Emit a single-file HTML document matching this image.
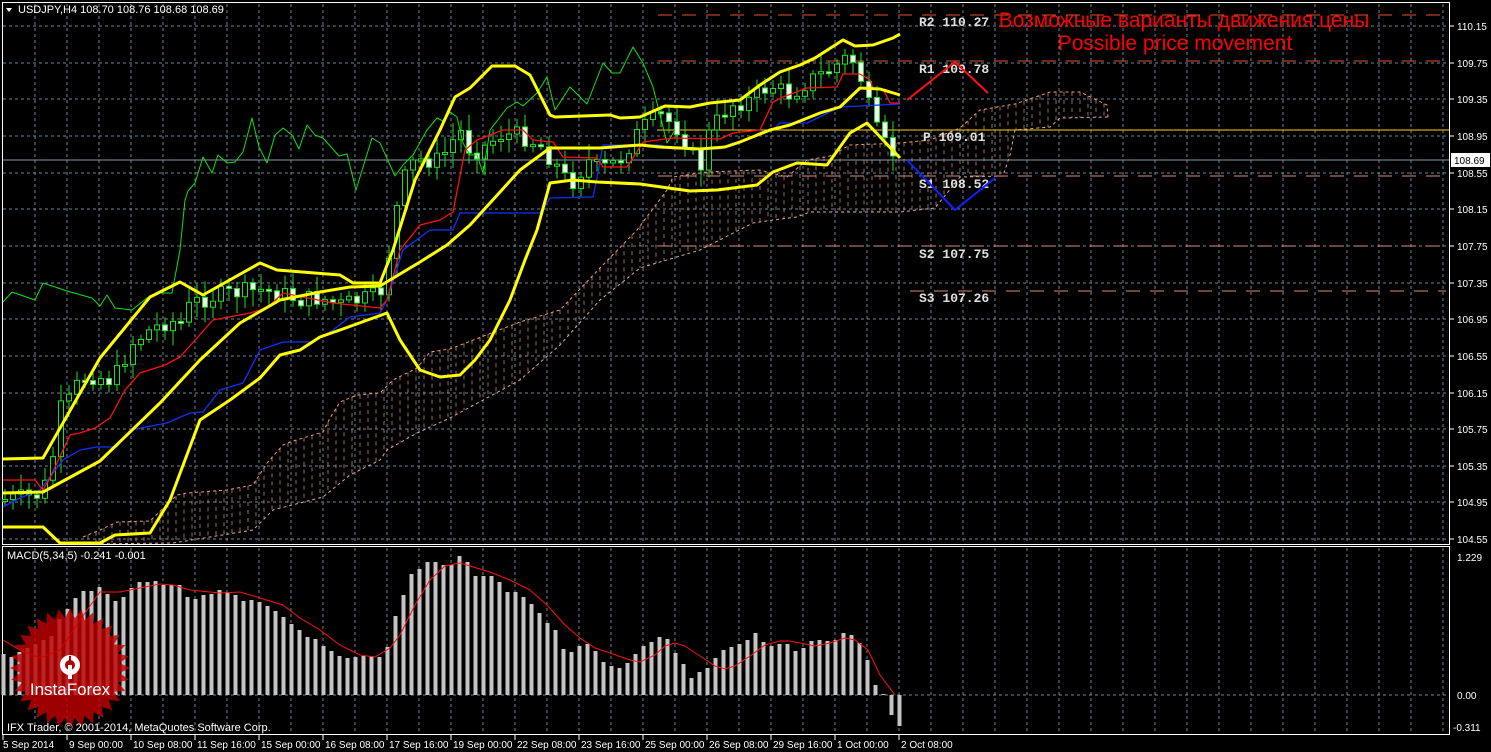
<!DOCTYPE html>
<html><head><meta charset="utf-8"><style>
html,body{margin:0;padding:0;background:#000;}
svg{display:block;font-family:"Liberation Sans",sans-serif;}
</style></head><body>
<svg id="s" width="1491" height="752" viewBox="0 0 1491 752" xmlns="http://www.w3.org/2000/svg">
<rect width="1491" height="752" fill="#000"/>
<g id="grid"></g>
<g id="cloud"></g>
<g id="lv"></g>
<g id="cand"></g>
<g id="lines"></g>
<g id="macd"></g>
<g id="logo" transform="translate(70,668)">
<polygon id="star" fill="#c00000" fill-opacity="0.82"/>
<g fill="#fff">
<circle cx="0" cy="-3" r="10"/>
</g>
<circle cx="0" cy="-3" r="5" fill="#b00000"/>
<rect x="-2" y="-3" width="4" height="14" fill="#fff"/>
<rect x="-1" y="-12" width="2" height="6" fill="#b00000"/>
<text x="0" y="27" fill="#fff" font-size="17" text-anchor="middle">InstaForex</text>
</g>
<g id="txt" font-size="11" fill="#fff">
<polygon points="6,8 12,8 9,12" fill="#fff"/>
<text x="18" y="13">USDJPY,H4  108.70 108.76 108.68 108.69</text>
<text x="7" y="559">MACD(5,34,5) -0.241 -0.001</text>
<text x="7" y="731">IFX Trader, © 2001-2014, MetaQuotes Software Corp.</text>
</g>
<g font-family="Liberation Mono,monospace" font-weight="bold" font-size="13" fill="#e0e0e0">
<text x="919" y="26">R2 110.27</text>
<text x="919" y="73">R1 109.78</text>
<text x="923" y="141">P 109.01</text>
<text x="919" y="188">S1 108.52</text>
<text x="919" y="258">S2 107.75</text>
<text x="919" y="302">S3 107.26</text>
</g>
<text x="1184" y="27" fill="#ff0000" font-size="21" text-anchor="middle">Возможные варианты движения цены</text>
<text x="1175" y="50" fill="#ff0000" font-size="21" text-anchor="middle">Possible price movement</text>
<polyline points="907,100 955,62 988,93" fill="none" stroke="#ff1010" stroke-width="2"/>
<polyline points="907,160 955,210 995,178" fill="none" stroke="#1020ff" stroke-width="2"/>
<g id="axis" font-size="10" fill="#fff"></g>
</svg>
<script>
var NS="http://www.w3.org/2000/svg";
function el(p,t,a,txt){var e=document.createElementNS(NS,t);for(var k in a)e.setAttribute(k,a[k]);if(txt!=null)e.textContent=txt;document.getElementById(p).appendChild(e);return e;}
var gc="#6f8096";
for(var x=35;x<=1443;x+=32){el("grid","line",{x1:x,y1:4,x2:x,y2:543,stroke:gc,"stroke-dasharray":"3,3"});el("grid","line",{x1:x,y1:548,x2:x,y2:733,stroke:gc,"stroke-dasharray":"3,3"});}
var prices=["110.15","109.75","109.35","108.95","108.55","108.15","107.75","107.35","106.95","106.55","106.15","105.75","105.35","104.95","104.55"];
for(var k=0;k<15;k++){var y=Math.round(26+36.65*k);el("grid","line",{x1:3,y1:y,x2:1449,y2:y,stroke:gc,"stroke-dasharray":"3,3"});el("axis","text",{x:1457,y:y+4},prices[k]);el("axis","line",{x1:1450,y1:y,x2:1454,y2:y,stroke:"#fff"});}
el("grid","line",{x1:3,y1:695,x2:1449,y2:695,stroke:gc,"stroke-dasharray":"3,3"});
el("grid","rect",{x:2.5,y:2.5,width:1447,height:542,fill:"none",stroke:"#fff"});
el("grid","rect",{x:2.5,y:546.5,width:1447,height:188,fill:"none",stroke:"#fff"});
el("axis","text",{x:1457,y:561},"1.229");el("axis","text",{x:1457,y:699},"0.00");el("axis","text",{x:1453,y:731},"-0.311");
var tl=["5 Sep 2014","9 Sep 00:00","10 Sep 08:00","11 Sep 16:00","15 Sep 00:00","16 Sep 08:00","17 Sep 16:00","19 Sep 00:00","22 Sep 08:00","23 Sep 16:00","25 Sep 00:00","26 Sep 08:00","29 Sep 16:00","1 Oct 00:00","2 Oct 08:00"];
for(var i=0;i<tl.length;i++){var tx=3+64*i;el("axis","line",{x1:tx,y1:735,x2:tx,y2:740,stroke:"#fff"});el("axis","text",{x:tx+(i?2:0),y:748},tl[i]);}
function dash(y,x1,col){el("lv","line",{x1:x1,y1:y,x2:1446,y2:y,stroke:col,"stroke-dasharray":"14,10"});}
dash(15,658,"#e0502a");dash(61,658,"#e0502a");dash(176,658,"#d88a78");dash(246,658,"#d88a78");dash(291,910,"#d88a78");
el("lv","line",{x1:657,y1:130,x2:1449,y2:130,stroke:"#ffd000"});
el("lv","line",{x1:3,y1:160,x2:1449,y2:160,stroke:"#8a9ab0"});
el("axis","rect",{x:1451,y:153,width:39,height:14,fill:"#fff"});
el("axis","text",{x:1454,y:164,fill:"#000"},"108.69");
function interp(pts,x){for(var i=0;i<pts.length-1;i++){if(x>=pts[i][0]&&x<=pts[i+1][0]){var t=(x-pts[i][0])/(pts[i+1][0]-pts[i][0]);return pts[i][1]+t*(pts[i+1][1]-pts[i][1]);}}return null;}
var up=[[83,537],[100,530],[117,522],[150,521],[177,495],[187,493],[227,490],[253,485],[267,463],[283,445],[290,442],[323,432],[330,418],[340,402],[357,395],[380,393],[393,380],[417,368],[430,352],[450,349],[520,322],[560,310],[600,268],[637,230],[667,190],[673,177],[707,172],[760,170],[787,177],[807,160],[830,156],[850,145],[900,143],[930,140],[960,128],[980,110],[1015,104],[1050,92],[1080,92],[1107,105],[1108,117]];
var lo=[[83,544],[173,543],[253,530],[273,510],[323,497],[350,475],[380,460],[387,450],[417,433],[450,418],[520,380],[560,345],[600,300],[640,268],[700,250],[753,223],[773,220],[797,217],[810,212],[900,212],[935,208],[960,177],[1003,176],[1010,155],[1015,130],[1050,127],[1060,118],[1108,117]];
function pl(p){return p.map(function(a){return a.join(",")}).join(" ");}
el("cloud","polyline",{points:pl(up),fill:"none",stroke:"#f0a070","stroke-dasharray":"3,3"});
el("cloud","polyline",{points:pl(lo),fill:"none",stroke:"#d8a8b0","stroke-dasharray":"3,3"});
for(var x=88;x<1108;x+=8){var a=interp(up,x),b=interp(lo,x);if(a!=null&&b!=null&&Math.abs(b-a)>4)el("cloud","line",{x1:x,y1:Math.min(a,b),x2:x,y2:Math.max(a,b),stroke:"#e89868","stroke-dasharray":"4,4","stroke-opacity":"0.7"});}
var cl=[[3,500],[40,495],[50,475],[60,410],[70,400],[80,380],[90,375],[110,380],[120,370],[130,345],[150,330],[170,320],[180,325],[190,305],[200,300],[220,295],[240,292],[260,290],[280,293],[300,300],[320,298],[340,305],[360,300],[380,295],[390,250],[400,190],[410,165],[420,160],[440,160],[460,130],[470,150],[480,150],[500,135],[520,135],[540,145],[560,170],[570,185],[590,160],[600,170],[620,160],[640,130],[660,115],[680,130],[700,170],[710,130],[730,105],[750,100],[770,85],[790,95],[810,80],[830,70],[850,55],[860,75],[870,110],[880,140],[890,150],[900,160]];
var prev=500,seed=7;function rnd(){seed=(seed*9301+49297)%233280;return seed/233280;}
for(var x=5;x<=899;x+=8){var c=interp(cl,x)+(rnd()-0.5)*18;var o=prev;var t=Math.min(o,c),b=Math.max(o,c);if(b-t<2)b=t+2;
el("cand","line",{x1:x,y1:t-3-rnd()*14,x2:x,y2:b+3+rnd()*14,stroke:"#20e020"});
el("cand","rect",{x:x-2.5,y:t,width:5,height:b-t,fill:(c<o?"#000":"#fff"),stroke:"#20e020"});prev=c;}
function line(p,col,w){el("lines","polyline",{points:pl(p),fill:"none",stroke:col,"stroke-width":w,"stroke-linejoin":"round"});}
line([[3,302],[12,292],[35,300],[43,283],[67,291],[92,298],[100,306],[107,295],[115,308],[132,310],[147,298],[160,293],[172,293],[180,250],[185,200],[188,191],[195,183],[203,157],[212,173],[218,155],[227,163],[235,162],[243,152],[252,118],[259,147],[267,163],[275,135],[283,128],[292,135],[299,149],[307,125],[315,135],[323,138],[339,156],[347,154],[356,190],[372,138],[380,143],[395,176],[403,165],[413,155],[427,130],[437,118],[443,121],[450,112],[457,117],[463,143],[470,155],[477,155],[483,173],[490,130],[507,108],[517,102],[523,106],[537,93],[547,77],[555,110],[570,87],[587,104],[603,63],[612,73],[620,73],[633,47],[643,63],[653,87],[667,143],[675,130]],"#10e010",1);
line([[3,507],[20,498],[40,490],[63,460],[80,450],[97,447],[117,447],[130,430],[167,423],[190,413],[203,412],[220,390],[243,383],[260,350],[283,342],[313,342],[333,330],[350,317],[380,313],[387,300],[403,250],[430,230],[453,230],[460,213],[540,213],[550,198],[593,197],[597,178],[603,145],[660,145],[673,149],[720,149],[733,143],[747,140],[760,132],[773,130],[780,123],[807,123],[840,107],[900,104]],"#1030ff",1.3);
line([[3,480],[35,480],[43,490],[50,478],[70,435],[80,433],[95,428],[110,418],[125,390],[140,373],[165,365],[180,357],[213,320],[250,313],[267,308],[283,293],[333,303],[380,308],[387,300],[400,250],[420,225],[440,220],[453,212],[465,150],[477,140],[503,130],[523,130],[533,140],[553,142],[563,157],[597,158],[603,167],[627,167],[640,147],[643,142],[673,138],[720,139],[733,133],[760,130],[773,102],[783,97],[807,88],[837,87],[843,74],[860,74],[870,80],[873,88],[883,89],[890,103],[900,103]],"#ff1010",1.3);
line([[3,459],[43,458],[100,358],[150,297],[180,282],[203,295],[260,263],[277,270],[340,275],[353,283],[380,283],[393,250],[415,180],[440,130],[455,97],[470,88],[492,66],[515,66],[530,75],[540,95],[550,115],[555,117],[610,115],[620,118],[640,117],[665,106],[690,107],[710,103],[740,100],[760,85],[780,72],[800,65],[815,58],[843,40],[855,46],[873,45],[893,38],[900,34]],"#ffff00",3);
line([[3,493],[43,492],[100,461],[160,403],[200,360],[240,323],[280,300],[320,292],[350,287],[380,286],[390,280],[420,262],[447,245],[470,225],[520,170],[550,148],[600,148],[640,145],[660,147],[700,149],[725,147],[740,142],[770,130],[790,125],[820,113],[840,107],[860,88],[880,89],[900,95]],"#ffff00",3);
line([[3,527],[43,527],[60,543],[100,543],[115,535],[150,533],[170,500],[200,420],[230,400],[260,378],[280,355],[300,350],[320,337],[340,330],[387,313],[400,340],[420,370],[440,377],[460,375],[475,360],[490,340],[510,300],[525,260],[537,230],[550,183],[573,180],[597,182],[640,184],[690,191],[717,190],[757,185],[773,172],[797,163],[827,165],[850,133],[867,123],[900,158]],"#ffff00",3);
var mt=[654,657,652,648,644,640,636,619,609,598,591,591,587,594,601,597,588,582,582,581,585,585,585,597,599,595,594,590,592,595,601,600,602,606,611,617,624,630,637,639,646,651,656,658,657,656,656,657,647,616,595,574,569,562,562,565,565,556,562,576,576,576,582,592,592,597,604,613,623,630,649,652,646,644,651,662,666,668,663,654,646,642,637,639,653,664,678,672,668,658,650,647,644,640,633,642,646,644,644,651,648,641,640,641,640,633,635,643,660,685,694,715,726];
for(var i=0;i<mt.length;i++){var x=3+8*i;var t=mt[i];var y1=Math.min(t,695),y2=Math.max(t,695);el("macd","rect",{x:x-1.5,y:y1,width:4,height:Math.max(1,y2-y1),fill:"#c4c4c4"});}
el("macd","polyline",{points:"3,640 20,650 40,658 60,650 80,620 100,592 120,592 140,588 160,584 173,585 190,590 220,593 240,592 260,598 283,605 300,618 320,630 340,645 360,655 375,657 390,648 400,635 415,605 430,580 445,566 460,563 470,566 490,572 510,580 530,590 547,605 565,625 580,638 595,648 610,653 630,660 640,662 655,655 665,646 675,643 685,646 700,656 715,666 725,669 735,666 750,656 765,645 780,641 790,641 800,643 815,646 830,643 845,638 855,640 868,650 880,675 895,695",fill:"none",stroke:"#ff1010","stroke-width":1});
var pts=[];for(var i=0;i<64;i++){var r=(i%2?50:60);var a=i*Math.PI/32;pts.push((r*Math.sin(a)).toFixed(1)+","+(-r*Math.cos(a)).toFixed(1));}
document.getElementById("star").setAttribute("points",pts.join(" "));
</script>
</body></html>
